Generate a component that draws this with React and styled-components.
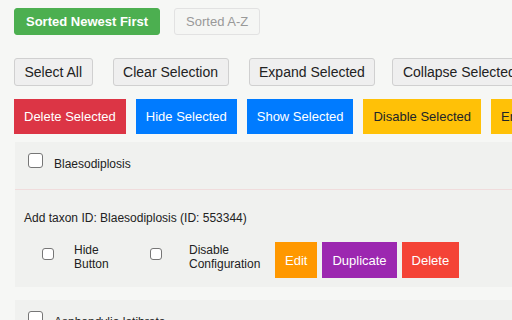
import React from 'react';
import styled, { createGlobalStyle, css } from 'styled-components';

const GlobalStyle = createGlobalStyle`
  html, body {
    margin: 0;
    padding: 0;
    background: #f6f7f5;
    overflow: hidden;
  }
  body {
    font-family: 'Liberation Sans', Arial, sans-serif;
    color: #222;
  }
`;

const Page = styled.div`
  width: 620px;
  padding: 8px 0 0 14px;
  box-sizing: border-box;
`;

const Bar = styled.div`
  display: flex;
  flex-wrap: nowrap;
  gap: ${props => props.gap || 10}px;
  margin-bottom: ${props => props.below || 0}px;
`;

const SortButton = styled.button`
  height: 27px;
  padding: 0 11px;
  font-family: inherit;
  font-size: 13px;
  border-radius: 3px;
  white-space: nowrap;
  ${props =>
    props.active
      ? css`
          background: #4caf50;
          color: #fff;
          font-weight: bold;
          border: 1px solid #4caf50;
        `
      : css`
          background: #f5f6f4;
          color: #999;
          border: 1px solid #e2e2e2;
        `};
`;

const PlainButton = styled.button`
  height: 28px;
  padding: 0 9.5px;
  margin-left: ${props => props.shift || 0}px;
  font-family: inherit;
  font-size: 14px;
  color: #222;
  background: #efefef;
  border: 1px solid #d0d0d0;
  border-radius: 3px;
  white-space: nowrap;
  flex-shrink: 0;
`;

const tones = {
  red: { bg: '#dc3545', fg: '#fff' },
  blue: { bg: '#007bff', fg: '#fff' },
  yellow: { bg: '#ffc107', fg: '#212529' },
  orange: { bg: '#ff9800', fg: '#fff' },
  purple: { bg: '#9c27b0', fg: '#fff' },
  tomato: { bg: '#f44336', fg: '#fff' },
};

const ActionButton = styled.button`
  height: ${props => props.h || 35}px;
  padding: 0 10px;
  font-family: inherit;
  font-size: 13px;
  border: none;
  border-radius: 0;
  white-space: nowrap;
  flex-shrink: 0;
  background: ${props => tones[props.tone].bg};
  color: ${props => tones[props.tone].fg};
`;

const Panel = styled.div`
  margin-left: 1px;
  margin-top: ${props => props.above || 0}px;
  background: #f0f1ef;
  box-sizing: border-box;
  ${props =>
    props.divider &&
    css`
      border-bottom: 1px solid #f0dcdc;
    `};
`;

const TaxonRow = styled.div`
  display: flex;
  align-items: flex-start;
  gap: 11px;
  height: 47px;
  padding: 11px 13px 0;
  box-sizing: border-box;
  font-size: 12px;
`;

const TaxonName = styled.span`
  margin-top: 4px;
  line-height: 14px;
`;

const Box = styled.input.attrs({ type: 'checkbox' })`
  appearance: none;
  margin: 0;
  flex-shrink: 0;
  width: ${props => props.size || 15}px;
  height: ${props => props.size || 15}px;
  background: #fff;
  border: 1px solid #767676;
  border-radius: 3px;
  box-sizing: border-box;
`;

const Details = styled.div`
  padding: 21px 0 9px 9px;
  font-size: 12px;
`;

const Caption = styled.div`
  line-height: 14px;
`;

const OptionRow = styled.div`
  display: flex;
  align-items: center;
  margin-top: 17px;
  padding-left: 18px;
`;

const Option = styled.label`
  display: flex;
  align-items: center;
  gap: ${props => props.gap}px;
  width: ${props => props.w}px;
  flex-shrink: 0;
  margin-bottom: 6px;
  line-height: 14px;
  & > input {
    margin-top: -6px;
  }
`;

const Actions = styled.div`
  display: flex;
  gap: 5px;
`;

export default function App() {
  return (
    <>
      <GlobalStyle />
      <Page>
        <Bar gap={14} below={23}>
          <SortButton active>Sorted Newest First</SortButton>
          <SortButton>Sorted A-Z</SortButton>
        </Bar>

        <Bar gap={20} below={13}>
          <PlainButton>Select All</PlainButton>
          <PlainButton>Clear Selection</PlainButton>
          <PlainButton>Expand Selected</PlainButton>
          <PlainButton shift={-3}>Collapse Selected</PlainButton>
        </Bar>

        <Bar gap={10} below={8}>
          <ActionButton tone="red">Delete Selected</ActionButton>
          <ActionButton tone="blue">Hide Selected</ActionButton>
          <ActionButton tone="blue">Show Selected</ActionButton>
          <ActionButton tone="yellow">Disable Selected</ActionButton>
          <ActionButton tone="yellow">Enable Selected</ActionButton>
        </Bar>

        <Panel divider>
          <TaxonRow>
            <Box />
            <TaxonName>Blaesodiplosis</TaxonName>
          </TaxonRow>
        </Panel>

        <Panel>
          <Details>
            <Caption>Add taxon ID: Blaesodiplosis (ID: 553344)</Caption>
            <OptionRow>
              <Option w={108} gap={20}>
                <Box size={12} />
                <span>
                  Hide
                  <br />
                  Button
                </span>
              </Option>
              <Option w={125} gap={27}>
                <Box size={12} />
                <span>
                  Disable
                  <br />
                  Configuration
                </span>
              </Option>
              <Actions>
                <ActionButton tone="orange" h={36}>Edit</ActionButton>
                <ActionButton tone="purple" h={36}>Duplicate</ActionButton>
                <ActionButton tone="tomato" h={36}>Delete</ActionButton>
              </Actions>
            </OptionRow>
          </Details>
        </Panel>

        <Panel above={13}>
          <TaxonRow>
            <Box />
            <TaxonName>Asphondylia latibrata</TaxonName>
          </TaxonRow>
        </Panel>
      </Page>
    </>
  );
}
